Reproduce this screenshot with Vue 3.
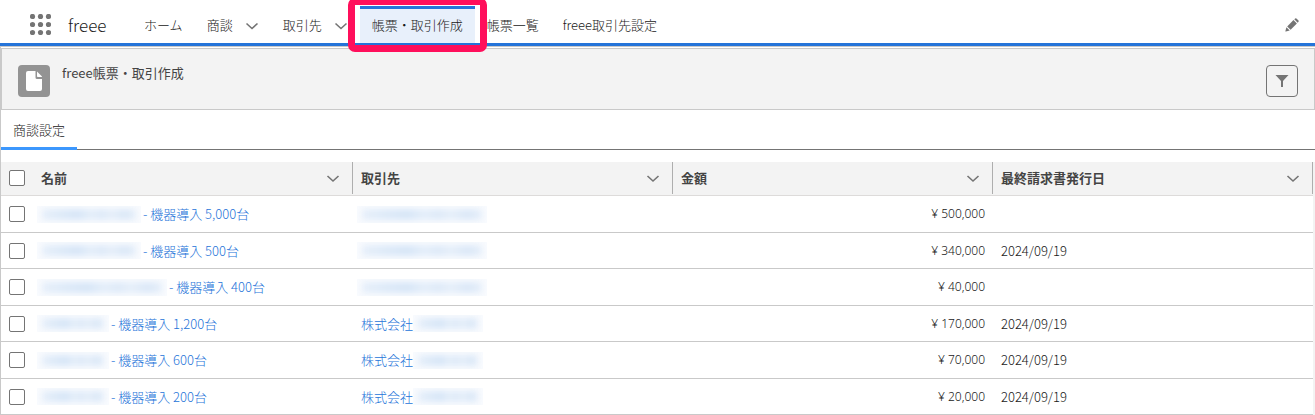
<script setup>
import { ref, computed } from 'vue';

const navItems = [
  { label: 'ホーム' },
  { label: '商談', menu: true },
  { label: '取引先', menu: true },
  { label: '帳票・取引作成', active: true },
  { label: '帳票一覧' },
  { label: 'freee取引先設定' },
];

const columns = ['名前', '取引先', '金額', '最終請求書発行日'];

// nameMask / accountMask are the widths of the hidden customer names
const rows = ref([
  { nameMask: 104, name: '- 機器導入 5,000台', account: '', accountMask: 130, amount: '500,000', date: '', checked: false },
  { nameMask: 104, name: '- 機器導入 500台', account: '', accountMask: 130, amount: '340,000', date: '2024/09/19', checked: false },
  { nameMask: 130, name: '- 機器導入 400台', account: '', accountMask: 130, amount: '40,000', date: '', checked: false },
  { nameMask: 72, name: '- 機器導入 1,200台', account: '株式会社', accountMask: 70, amount: '170,000', date: '2024/09/19', checked: false },
  { nameMask: 72, name: '- 機器導入 600台', account: '株式会社', accountMask: 70, amount: '70,000', date: '2024/09/19', checked: false },
  { nameMask: 72, name: '- 機器導入 200台', account: '株式会社', accountMask: 70, amount: '20,000', date: '2024/09/19', checked: false },
]);

const allChecked = computed({
  get: () => rows.value.every((row) => row.checked),
  set: (value) => rows.value.forEach((row) => { row.checked = value; }),
});
</script>

<template>
  <div class="app">
    <header class="nav-bar">
      <button class="icon-button launcher" aria-label="アプリケーションランチャー">
        <svg width="21" height="21" viewBox="0 0 21 21">
          <template v-for="y in 3" :key="y">
            <circle v-for="x in 3" :key="x" :cx="x * 8 - 5.5" :cy="y * 8 - 5.5" r="2.6" />
          </template>
        </svg>
      </button>
      <span class="app-name">freee</span>
      <nav class="nav">
        <div v-for="item in navItems" :key="item.label" class="nav-item" :class="{ active: item.active }">
          <a href="#" class="nav-link">{{ item.label }}</a>
          <button v-if="item.menu" class="icon-button nav-menu" :aria-label="item.label + 'メニュー'">
            <svg class="chevron" width="14" height="14" viewBox="0 0 14 14"><path d="M1.500 5.500 L7 10.500 L12.500 5.500" /></svg>
          </button>
          <span v-if="item.active" class="highlight"></span>
        </div>
      </nav>
      <button class="icon-button edit" aria-label="編集">
        <svg width="14" height="14" viewBox="0 0 14 14">
          <path d="M1.400 9.300 L4.700 12.600 L0.900 13.600 Q0.300 13.700 0.400 13.100 Z" />
          <path d="M2.200 8.400 L8.500 2.100 L11.900 5.500 L5.600 11.800 Z" />
          <path d="M9.300 1.300 L10.200 0.500 Q10.800 0 11.400 0.500 L13.500 2.600 Q14 3.200 13.500 3.800 L12.700 4.700 Z" />
        </svg>
      </button>
    </header>

    <main class="content">
      <div class="page-header">
        <span class="page-icon">
          <svg width="32" height="32" viewBox="0 0 32 32">
            <path d="M10 6 H17.500 V12.500 Q17.500 14 19 14 H24 V24 Q24 26 22 26 H10 Q8 26 8 24 V8 Q8 6 10 6 Z" />
            <path d="M19 6.500 L24 11.500 Q24 12 23.500 12 H19.700 Q19 12 19 11.300 Z" />
          </svg>
        </span>
        <h1 class="page-title">freee帳票・取引作成</h1>
        <button class="filter" aria-label="フィルター">
          <svg width="14" height="14" viewBox="0 0 14 14"><path d="M0.500 1 H13.500 L8 7 V13 H6 V7 Z" /></svg>
        </button>
      </div>

      <div class="tabs" role="tablist">
        <button class="tab" role="tab" aria-selected="true">商談設定</button>
      </div>

      <div class="table-wrap">
        <table>
          <colgroup>
            <col class="check-col" />
            <col v-for="column in columns" :key="column" />
          </colgroup>
          <thead>
            <tr>
              <th class="check"><input v-model="allChecked" type="checkbox" aria-label="すべて選択" /></th>
              <th v-for="column in columns" :key="column" scope="col">
                <div class="head-cell">
                  <span>{{ column }}</span>
                  <button class="icon-button" :aria-label="column + 'メニュー'">
                    <svg class="chevron" width="14" height="14" viewBox="0 0 14 14"><path d="M1.500 5 L7 10 L12.500 5" /></svg>
                  </button>
                </div>
              </th>
            </tr>
          </thead>
          <tbody>
            <tr v-for="(row, index) in rows" :key="index">
              <td class="check"><input v-model="row.checked" type="checkbox" :aria-label="row.name" /></td>
              <td>
                <a href="#" class="record">
                  <span class="mask lead" :style="{ width: row.nameMask + 'px' }"></span>
                  <span class="record-name">{{ row.name }}</span>
                </a>
              </td>
              <td>
                <a href="#" class="record">
                  <span v-if="row.account">{{ row.account }}</span>
                  <span class="mask" :class="{ lead: !row.account }" :style="{ width: row.accountMask + 'px' }"></span>
                </a>
              </td>
              <td class="amount">¥ {{ row.amount }}</td>
              <td>{{ row.date }}</td>
            </tr>
          </tbody>
        </table>
      </div>
    </main>
  </div>
</template>

<style>
body {
  background: #fff;
}
</style>

<style scoped>
.app {
  font-family: "Noto Sans CJK JP", "Noto Sans", sans-serif;
  font-size: 13px;
  font-weight: 300;
  line-height: 20px;
  color: #181818;
  overflow: hidden;
}

button {
  font: inherit;
  color: inherit;
  cursor: pointer;
}

a {
  text-decoration: none;
}

.icon-button {
  display: flex;
  padding: 0;
  border: none;
  background: none;
  fill: #747474;
}

.chevron {
  fill: none;
  stroke: #747474;
  stroke-width: 1.6;
}

/* Global navigation */
.nav-bar {
  display: flex;
  align-items: center;
  height: 37px;
  padding: 6px 16px 0 30px;
  border-bottom: 3px solid #2574d9;
}

.app-name {
  width: 64px;
  margin-left: 17px;
  font-size: 17px;
}

.nav {
  display: flex;
  flex: 1;
  align-self: stretch;
}

.nav-item {
  position: relative;
  display: flex;
  align-items: center;
  gap: 12px;
  padding: 0 12px;
}

.nav-link {
  color: #181818;
  white-space: nowrap;
}

.nav-item.active {
  background: #e8f0fb;
  box-shadow: inset 0 3px #2574d9;
}

.highlight {
  position: absolute;
  z-index: 1;
  inset: -8px -12px -9px -12px;
  border: 7px solid #ff0f5b;
  border-radius: 7px;
  pointer-events: none;
}

/* Page header */
.content {
  border-top: 1px solid #c9c9c9;
  border-left: 1px solid #c9c9c9;
}

.page-header {
  display: flex;
  align-items: flex-start;
  gap: 12px;
  margin-top: 1px;
  padding: 16px 16px 12px;
  background: #f3f3f3;
  border: 1px solid #c9c9c9;
}

.page-icon {
  display: flex;
  border-radius: 4px;
  background: #939393;
  fill: #fff;
}

.page-title {
  flex: 1;
  margin: 0;
  font-size: 13px;
  font-weight: 400;
  line-height: 16px;
  color: #444;
}

.filter {
  display: flex;
  align-items: center;
  justify-content: center;
  width: 32px;
  height: 32px;
  padding: 0;
  border: 1px solid #747474;
  border-radius: 4px;
  background: #f3f3f3;
  fill: #747474;
}

/* Tabs */
.tabs {
  display: flex;
  height: 40px;
  box-shadow: inset 0 -1px #747474;
}

.tab {
  padding: 3px 12px 0;
  border: none;
  border-bottom: 3px solid #3c97fd;
  background: none;
}

/* Records table */
.table-wrap {
  margin-top: 12px;
  padding-right: 2px;
  background: #f3f3f3;
}

table {
  width: 100%;
  table-layout: fixed;
  border-collapse: separate;
  border-spacing: 0;
  background: #fff;
}

.check-col {
  width: 32px;
}

th,
td {
  box-sizing: border-box;
  height: 36px;
  padding: 0 8px;
  border-bottom: 1px solid #c9c9c9;
  text-align: left;
  white-space: nowrap;
}

tbody tr:nth-child(odd) td {
  height: 37px;
}

th {
  height: 34px;
  padding: 0;
  background: #f3f3f3;
  border-bottom-color: #dddbda;
  font-weight: 700;
  color: #444;
  vertical-align: top;
}

.head-cell {
  box-sizing: border-box;
  display: flex;
  align-items: center;
  justify-content: space-between;
  height: 32px;
  padding: 0 12px 0 8px;
  border-right: 1px solid #aeaeae;
}

.check {
  padding: 0 0 0 8px;
}

th.check {
  padding-top: 8px;
}

input[type="checkbox"] {
  appearance: none;
  display: block;
  width: 16px;
  height: 16px;
  margin: 0;
  border: 1px solid #747474;
  border-radius: 2px;
  background: #fff;
}

input[type="checkbox"]:checked {
  background: #2574d9;
}

.record {
  display: flex;
  align-items: center;
  color: #2574d9;
}

.record-name {
  margin-left: 2px;
}

.mask {
  height: 17px;
  overflow: hidden;
  background: #f9fbfe;
}

.mask.lead {
  margin-left: -4px;
}

.mask::before {
  content: "";
  display: block;
  height: 11px;
  margin: 3px 5px;
  background: linear-gradient(90deg, #e6effa, #dce9f8 22%, #d6e5f7 38%, #e4eefa 52%, #dde9f8 64%, #e6effa 74%, #dae7f7 88%, #e6effa);
  filter: blur(3px);
}

.amount {
  text-align: right;
  font-family: "Noto Sans", sans-serif;
  font-size: 12px;
}
</style>
